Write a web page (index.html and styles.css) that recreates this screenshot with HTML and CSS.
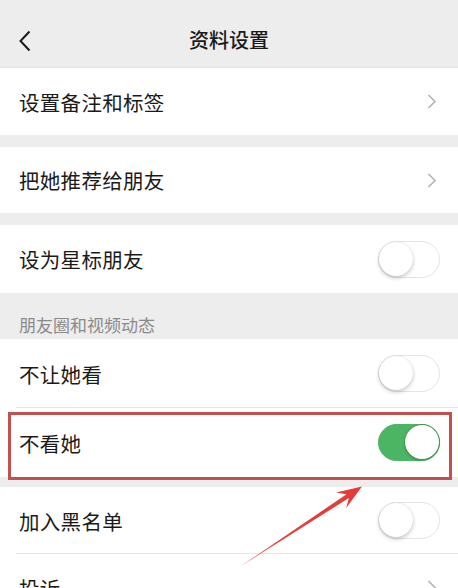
FILE: index.html
```html
<!DOCTYPE html>
<html lang="zh-CN">
<head>
<meta charset="utf-8">
<title>资料设置</title>
<link rel="stylesheet" href="styles.css">
</head>
<body>
<div class="page">
  <header class="header">
    <div class="bar">
      <svg class="back" width="14" height="22" viewBox="0 0 14 22"><path d="M11.5 1.5 L2.5 11 L11.5 20.5" fill="none" stroke="#1a1a1a" stroke-width="2"/></svg>
      <div class="title">资料设置</div>
    </div>
  </header>

  <div class="row h67">
    <span class="label">设置备注和标签</span>
    <svg class="chev" width="10" height="15" viewBox="0 0 10 15"><path d="M1.5 1 L8 7.5 L1.5 14" fill="none" stroke="#b4b4b4" stroke-width="1.6"/></svg>
  </div>
  <div class="gap"></div>
  <div class="row h66">
    <span class="label">把她推荐给朋友</span>
    <svg class="chev" width="10" height="15" viewBox="0 0 10 15"><path d="M1.5 1 L8 7.5 L1.5 14" fill="none" stroke="#b4b4b4" stroke-width="1.6"/></svg>
  </div>
  <div class="gap"></div>
  <div class="row h68">
    <span class="label">设为星标朋友</span>
    <span class="toggle"><span class="knob"></span></span>
  </div>
  <div class="section">朋友圈和视频动态</div>
  <div class="row h69 sep">
    <span class="label">不让她看</span>
    <span class="toggle"><span class="knob"></span></span>
  </div>
  <div class="row h69">
    <span class="label">不看她</span>
    <span class="toggle on"><span class="knob"></span></span>
  </div>
  <div class="gap small"></div>
  <div class="row h67 sep">
    <span class="label">加入黑名单</span>
    <span class="toggle"><span class="knob"></span></span>
  </div>
  <div class="row h67">
    <span class="label">投诉</span>
    <svg class="chev" width="10" height="15" viewBox="0 0 10 15"><path d="M1.5 1 L8 7.5 L1.5 14" fill="none" stroke="#b4b4b4" stroke-width="1.6"/></svg>
  </div>

  <div class="highlight"></div>
  <svg class="arrow" width="458" height="588" viewBox="0 0 458 588">
    <polygon points="241,566 346.5,494.3 336,492.5 362,486.5 346.2,508 348.9,498" fill="#e63b3b"/>
  </svg>
</div>
</body>
</html>
```

FILE: styles.css
```css
html, body {
  margin: 0;
  padding: 0;
  background: #ededed;
}
body {
  font-family: "Noto Sans CJK SC", "Noto Sans", sans-serif;
  color: #191919;
}
.page {
  position: relative;
  width: 458px;
  height: 588px;
  overflow: hidden;
  background: #ededed;
}
.header {
  padding-top: 14px;
  border-bottom: 1px solid #e2e2e2;
  background: #ededed;
}
.bar {
  height: 53px;
  display: flex;
  align-items: center;
  justify-content: center;
  position: relative;
}
.back {
  position: absolute;
  left: 18px;
  top: 16px;
}
.title {
  font-size: 20px;
  font-weight: 500;
  color: #191919;
  line-height: 24px;
  margin-top: -1px;
}
.row {
  background: #fff;
  display: flex;
  align-items: center;
  justify-content: space-between;
  padding: 0 18px 0 19px;
  box-sizing: border-box;
}
.h66 { height: 66px; }
.h67 { height: 67px; }
.h68 { height: 68px; }
.h69 { height: 69px; }
.row.sep {
  background: linear-gradient(#e6e6e6, #e6e6e6) 16px 100% / calc(100% - 16px) 1px no-repeat, #fff;
}
.label {
  font-size: 20.5px;
  line-height: 28px;
  letter-spacing: 0.3px;
  color: #1a1a1a;
}
.chev {
  margin-right: 3px;
}
.gap {
  height: 12px;
}
.gap.small {
  height: 10px;
}
.section {
  height: 46px;
  box-sizing: border-box;
  padding: 0 19px 4px;
  display: flex;
  align-items: flex-end;
  font-size: 17px;
  line-height: 20px;
  color: #8a8a8a;
}
.toggle {
  width: 62px;
  height: 37px;
  box-sizing: border-box;
  border-radius: 19px;
  border: 1.5px solid #e4e4e4;
  background: #fff;
  position: relative;
  flex: none;
}
.toggle .knob {
  position: absolute;
  left: 0;
  top: 0;
  width: 34px;
  height: 34px;
  border-radius: 50%;
  background: #fff;
  box-shadow: 0 2px 4px rgba(0,0,0,0.22), 0 0 1px rgba(0,0,0,0.15);
}
.toggle.on {
  background: #4cb563;
  border-color: #4cb563;
}
.toggle.on .knob {
  left: auto;
  right: 0;
  box-shadow: 0 0 0 1px #3f9a54, 0 2px 3px rgba(0,0,0,0.2);
}
.highlight {
  position: absolute;
  left: 8px;
  top: 412px;
  width: 444px;
  height: 68px;
  box-sizing: border-box;
  border: 3px solid #c4504e;
}
.arrow {
  position: absolute;
  left: 0;
  top: 0;
}
```
